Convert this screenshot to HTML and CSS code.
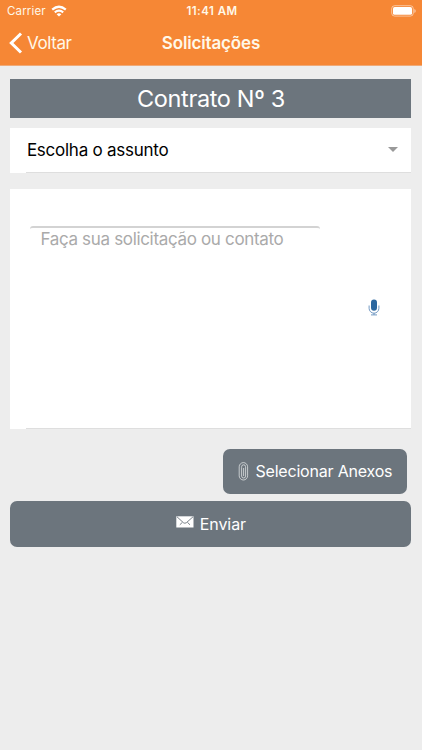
FILE: index.html
```html
<!DOCTYPE html>
<html lang="pt-BR">
<head>
<meta charset="utf-8">
<title>Solicitações</title>
<link rel="stylesheet" href="styles.css">
</head>
<body>
<header class="header">
  <div class="status">
    <div class="carrier"><span>Carrier</span>
      <svg class="wifi" width="16" height="12" viewBox="0 0 16 12"><g fill="none" stroke="#fff" stroke-width="2.2"><path d="M1.2 4.7Q8-1.2 14.8 4.7M3.8 7.3q4.2-3.5 8.4 0"/></g><path d="M5.6 9.2q2.4-1.8 4.8 0L8 11.6z" fill="#fff"/></svg>
    </div>
    <time class="clock">11:41 AM</time>
    <svg class="battery" width="26" height="12" viewBox="0 0 26 12"><rect x=".7" y=".7" width="21.6" height="10.4" rx="3" fill="none" stroke="#fff" stroke-opacity=".5"/><rect x="2" y="2" width="19" height="7.8" rx="1.6" fill="#fff"/><path d="M23.4 4v4q1.3-.7 1.3-2t-1.3-2z" fill="#fff" opacity=".6"/></svg>
  </div>
  <nav class="nav">
    <a class="back"><svg width="14" height="22" viewBox="0 0 14 22"><path d="M12 1.5 2.3 11 12 20.5" fill="none" stroke="#fff" stroke-width="3"/></svg><span>Voltar</span></a>
    <h1>Solicitações</h1>
  </nav>
</header>
<main class="content">
  <h2 class="contract"><span>Contrato Nº 3</span></h2>
  <div class="select"><span>Escolha o assunto</span><i class="caret"></i></div>
  <section class="message">
    <div class="field"><span>Faça sua solicitação ou contato</span></div>
    <svg class="mic" width="12" height="17" viewBox="0 0 12 17"><rect x="3" y=".4" width="6" height="11.4" rx="3" fill="#2b679f"/><path d="M1.1 6.5v2.8a4.9 4.9 0 0 0 9.8 0V6.5M6 14v2M3 15.9h6" fill="none" stroke="#7299c3" stroke-width="1"/></svg>
  </section>
  <button class="btn attach"><svg width="11" height="19" viewBox="0 0 11 19"><path d="M7.6 5v9a2 2 0 0 1-4 0V5.5M1.2 13.8V4.8a4.2 4.2 0 0 1 8.4 0v9a4.2 4.2 0 0 1-8.4 0M3.6 5.5V4.8a2 2 0 0 1 4 0M5.6 6v8" fill="none" stroke="#eef0f1" stroke-width=".7"/></svg><span>Selecionar Anexos</span></button>
  <button class="btn send"><svg width="18" height="12" viewBox="0 0 18 12"><path fill="#fff" d="M.3.3h17.2v11.2H.3z"/><path d="m1 .8 6.4 5.9q1.5 1.1 3 0L17 .8M3.8 8.8l2.6-2.5M14 8.8l-2.6-2.5" fill="none" stroke="#6c757d" stroke-width=".9"/></svg><span>Enviar</span></button>
</main>
</body>
</html>
```
FILE: styles.css
```css
* { box-sizing: border-box; }
body { margin: 0; min-height: 750px; background: #ededed; font-family: Inter, "Liberation Sans", sans-serif; overflow: hidden; }
h1, h2 { margin: 0; font-weight: 500; }
svg { display: block; flex: none; }
span, time, h1 { white-space: nowrap; }
.header { height: 66px; background: #f68735; color: #fff8e8; border-bottom: 1px solid #efaa78; }
.status { display: grid; grid-template-columns: 1fr auto 1fr; height: 22px; align-items: center; padding: 0 5px 0 7px; }
.carrier { display: flex; align-items: center; gap: 5px; font-size: 11.5px; letter-spacing: .15px; }
.clock { font-size: 11.5px; font-weight: 600; letter-spacing: .45px; }
.battery { justify-self: end; }
.nav { display: grid; grid-template-columns: 1fr auto 1fr; height: 42px; align-items: center; padding: 0 9px; }
.back { display: flex; align-items: center; gap: 4px; font-size: 17px; letter-spacing: -.4px; }
.nav h1 { font-size: 17px; font-weight: 600; letter-spacing: -.15px; }
.content { padding: 13px 10.6px 0 10.4px; display: flex; flex-direction: column; }
.contract { height: 38.5px; background: #6c757d; color: #fff; font-size: 23.5px; font-weight: 400; letter-spacing: -.35px; display: flex; align-items: center; justify-content: center; }
.select { height: 45.5px; margin-top: 10px; padding: 0 13px 0 16.5px; display: flex; align-items: center; justify-content: space-between; font-size: 17px; letter-spacing: -.25px; color: #000; }
.select, .message { background: linear-gradient(#dedede, #dedede) 16px 100% / 100% 1px no-repeat, #fff; }
.caret { border: 5px solid transparent; border-top-color: #999; border-bottom: 0; margin-top: -2px; }
.message { height: 240px; margin-top: 16px; padding: 37px 31.5px 0 20px; display: flex; justify-content: space-between; }
.field { width: 290px; height: 165px; border-top: 2px solid #d3d3d3; border-radius: 3px; padding: 1px 10px; color: #aaa; font-size: 17px; letter-spacing: -.33px; line-height: 20px; }
.mic { margin-top: 73px; }
.btn { height: 45.5px; border: 0; border-radius: 7px; background: #6c757d; color: #fff; font-family: inherit; font-size: 16px; letter-spacing: -.2px; display: flex; align-items: center; justify-content: center; padding: 0; }
.attach { width: 184px; align-self: flex-end; margin: 19.5px 4px 0 0; gap: 6px; }
.send { margin-top: 7px; gap: 6px; letter-spacing: -.1px; }
.send svg { margin-bottom: 3px; }
```
